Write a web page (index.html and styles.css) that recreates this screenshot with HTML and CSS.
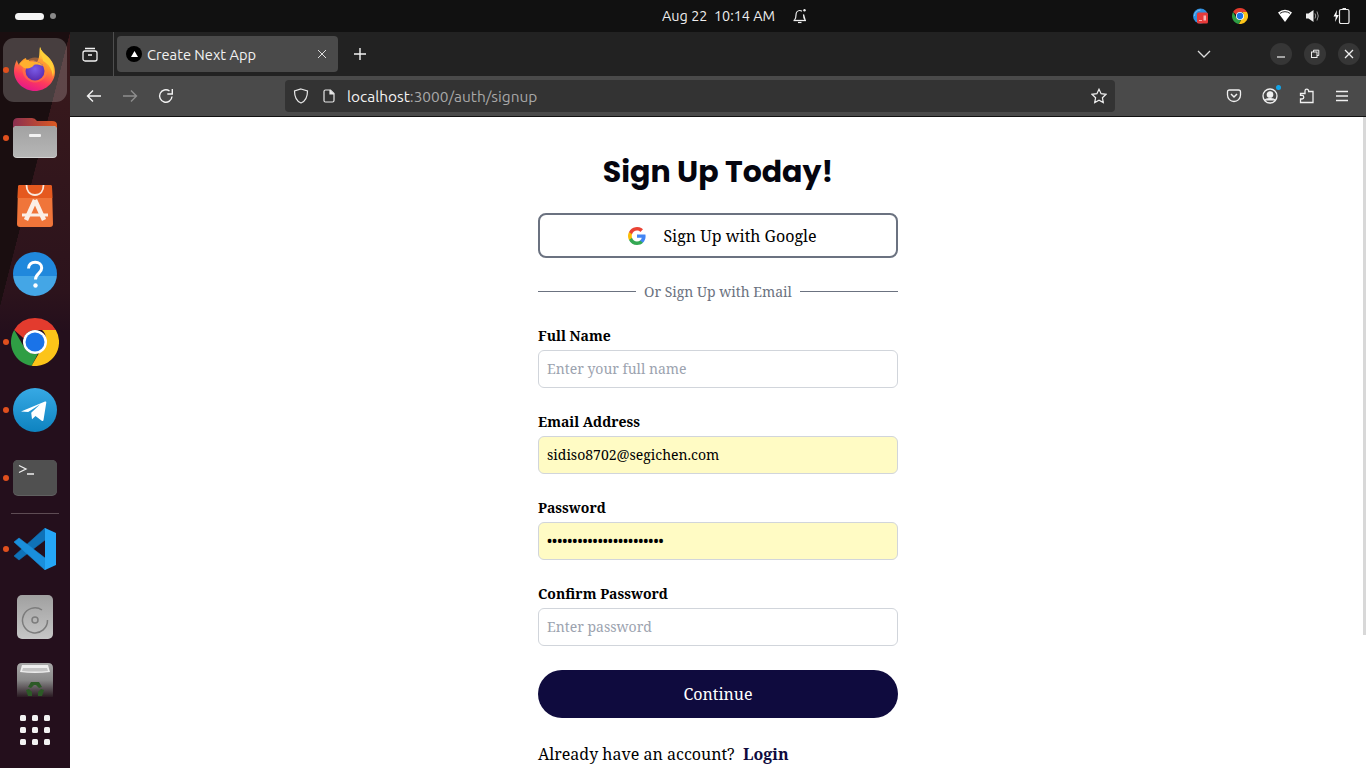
FILE: index.html
```html
<!DOCTYPE html>
<html lang="en">
<head>
<meta charset="utf-8">
<title>Create Next App</title>
<link rel="stylesheet" href="styles.css">
</head>
<body>
<header class="topbar">
  <div class="activities"><span class="pill"></span><span class="wsdot"></span></div>
  <div class="clock"><span>Aug 22&nbsp;&nbsp;10:14 AM</span>
    <svg class="bell" width="14" height="16" viewBox="0 0 14 16" fill="none" stroke="#eee" stroke-width="1.200"><path d="M1.500 12c1.200-1.300 1.500-2.800 1.500-5 0-2.500 1.500-4.500 3.700-4.500 1 0 1.700.3 2.200.7M10.500 6.500c0 2.500.3 4.100 1.600 5.500z"/><path d="M.5 12.500h12.500" stroke-width="1.300"/><path d="M5 14.500h3.500"/><circle cx="11.500" cy="2.200" r="1.200" fill="#eee" stroke="none"/></svg>
  </div>
  <div class="tray">
    <svg class="tray-a" width="16" height="16" viewBox="0 0 16 16"><circle cx="7.500" cy="8" r="7.500" fill="#2f8fe0"/><path d="M1.500 8a6 6 0 0 1 6-6" stroke="#7cc4f5" stroke-width="1" fill="none"/><rect x="4" y="4.500" width="11" height="11" rx="1.500" fill="#e63a3a"/><rect x="6" y="12" width="3" height="1" fill="#f9b0b0"/><rect x="10.500" y="7.500" width="2.500" height="5" fill="#f9b0b0"/></svg>
    <svg class="tray-b" width="16" height="16" viewBox="0 0 48 48"><use href="#chrome"/></svg>
    <svg class="tray-c" width="16" height="14" viewBox="0 0 16 14"><path d="M1 3.500Q8-2 15 3.500L8 13z" fill="#fff"/><path d="M3 4.400Q8 1 13 4.400" stroke="#111" stroke-width=".9" fill="none"/></svg>
    <svg class="tray-d" width="14" height="14" viewBox="0 0 14 14"><path d="M0 4.500h2.500L7.500 1v12L2.500 9.500H0z" fill="#eee"/><path d="M9 4.500q1.500 2.500 0 5M11 2.500q2.500 4.500 0 9" stroke="#999" stroke-width="1" fill="none"/></svg>
    <svg class="tray-e" width="18" height="16" viewBox="0 0 18 16"><path d="M4 2L.5 8.500h2.300L2 14 5.800 7H3.500z" fill="#fff"/><rect x="6.500" y="1.500" width="9.500" height="14" rx="1.500" fill="none" stroke="#eee" stroke-width="1.200"/><rect x="9.500" y="0" width="3.500" height="1.500" fill="#eee"/></svg>
  </div>
</header>

<div class="desktop">
  <nav class="dock">
    <div class="dock-item active"><span class="run"></span>
      <svg width="44" height="44" viewBox="0 0 44 44">
        <defs>
          <linearGradient id="ffa" x1=".7" y1="0" x2=".35" y2="1"><stop offset="0" stop-color="#ffe14a"/><stop offset=".4" stop-color="#ff9a2a"/><stop offset=".72" stop-color="#ff3b5c"/><stop offset="1" stop-color="#e3168c"/></linearGradient>
          <radialGradient id="ffb" cx=".5" cy=".4" r=".6"><stop offset="0" stop-color="#7a5ce8"/><stop offset="1" stop-color="#5a2cb0"/></radialGradient>
        </defs>
        <path d="M27 0c1 4 4 6 7 9 6 5 8 11 8 16 0 10-9 19-20 19S1 35 1 24c0-4 1-8 3-11 0 2 1 3 2 5 1-3 4-6 7-7 0 2 1 3 3 3 5-1 6 0 8 1 3-4 2-10 3-15z" fill="url(#ffa)"/>
        <circle cx="22" cy="23" r="12.500" fill="#ff8a3a" opacity=".45"/>
        <circle cx="22" cy="24" r="9.500" fill="url(#ffb)"/>
        <path d="M6 17c3-3 6-5 9-4 2 0 0 2 4 2 4-1 9 0 11 4-3-1-7-2-9-1-2 3-6 4-10 3z" fill="#ffb02e"/>
        <path d="M27 0c1 4 4 6 7 9 6 5 8 12 6 21-1-8-4-13-10-16 0-5-4-7-3-14z" fill="#ffcf38"/>
      </svg>
    </div>
    <div class="dock-item"><span class="run"></span>
      <svg width="44" height="40" viewBox="0 0 44 40">
        <defs>
          <linearGradient id="fdr" x1="0" y1="0" x2="1" y2="0"><stop offset="0" stop-color="#8a2f50"/><stop offset="1" stop-color="#dd5a22"/></linearGradient>
          <linearGradient id="fdb" x1="0" y1="0" x2="0" y2="1"><stop offset="0" stop-color="#a2a2a2"/><stop offset="1" stop-color="#b6b6b6"/></linearGradient>
        </defs>
        <path d="M0 5q0-5 5-5h14q3 0 5 3h15q5 0 5 4v10H0z" fill="url(#fdr)"/>
        <rect y="8" width="44" height="32" rx="4" fill="#d4d4d4"/>
        <rect y="8" width="44" height="31" rx="4" fill="url(#fdb)"/>
        <rect x="16" y="16" width="12" height="3" rx="1" fill="#f2f2f2"/>
      </svg>
    </div>
    <div class="dock-item">
      <svg width="36" height="42" viewBox="0 0 36 42">
        <path d="M3 0h30q2 0 2 2l1 37q0 3-3 3H3q-3 0-3-3L1 2q0-2 2-2z" fill="#f0753a"/>
        <path d="M3 0h30q2 0 2 2l.4 11H.6L1 2q0-2 2-2z" fill="#e5591f"/>
        <path d="M9.500 0c0 6 3 10 8.500 10s8.500-4 8.500-10" stroke="#f8e8de" stroke-width="1.800" fill="none"/>
        <path d="M18 15L9 35M18 15l9 20" stroke="#fbeee6" stroke-width="4.500" fill="none"/>
        <path d="M5 30h26" stroke="#fbeee6" stroke-width="3"/>
      </svg>
    </div>
    <div class="dock-item">
      <svg width="44" height="44" viewBox="0 0 44 44">
        <clipPath id="hlpc"><circle cx="22" cy="22" r="22"/></clipPath>
        <g clip-path="url(#hlpc)">
          <rect width="44" height="24" fill="#2088dc"/>
          <rect y="24" width="44" height="20" fill="#44a6e6"/>
        </g>
        <path d="M15.500 16.500c0-3.800 2.900-6.200 6.700-6.200s6.500 2.400 6.500 5.700c0 5.500-6.200 5.500-6.200 11.500" stroke="#fff" stroke-width="3" fill="none"/>
        <circle cx="22.500" cy="33.500" r="2.200" fill="#fff"/>
      </svg>
    </div>
    <div class="dock-item"><span class="run"></span>
      <svg width="48" height="48" viewBox="0 0 48 48">
        <symbol id="chrome" viewBox="0 0 48 48">
          <path d="M24 0a24 24 0 0 1 20.800 12H24a12 12 0 0 0-11.400 8.300L3.200 12A24 24 0 0 1 24 0z" fill="#e33b2e"/>
          <path d="M3.200 12l10.400 18A12 12 0 0 0 27 35.600L20.600 47.800A24 24 0 0 1 3.200 12z" fill="#2f9e44"/>
          <path d="M44.800 12A24 24 0 0 1 20.600 47.800L31 30a12 12 0 0 0 0-18z" fill="#fcc419"/>
          <circle cx="24" cy="24" r="12" fill="#fff"/>
          <circle cx="24" cy="24" r="9.500" fill="#1a73e8"/>
        </symbol>
        <use href="#chrome"/>
      </svg>
    </div>
    <div class="dock-item"><span class="run"></span>
      <svg width="44" height="44" viewBox="0 0 44 44">
        <defs><linearGradient id="tg" x1="0" y1="0" x2="0" y2="1"><stop offset="0" stop-color="#37a9e4"/><stop offset="1" stop-color="#0e83c0"/></linearGradient></defs>
        <circle cx="22" cy="22" r="22" fill="url(#tg)"/>
        <path d="M8 23.500L32 13.500q1.500-.5 1.300 1L30.500 32q-.3 1.500-1.800.7L22.500 28l-3.500 3.200-.8-6.500 9-8.500-12 7.700z" fill="#fff"/>
      </svg>
    </div>
    <div class="dock-item"><span class="run"></span>
      <svg width="44" height="36" viewBox="0 0 44 36">
        <rect width="44" height="36" rx="5" fill="#606060"/>
        <rect width="44" height="35" rx="5" fill="#505050"/>
        <path d="M6 5.500l7 3.500-7 3.500" stroke="#eee" stroke-width="1.300" fill="none"/>
        <path d="M14 14h7" stroke="#eee" stroke-width="1.500"/>
      </svg>
    </div>
    <div class="dock-sep"></div>
    <div class="dock-item"><span class="run"></span>
      <svg width="42" height="42" viewBox="0 0 42 42">
        <path d="M31 0v12L5 32 0 28z" fill="#0f72b8" stroke="#0f72b8" stroke-width=".6" stroke-linejoin="round"/>
        <path d="M31 42V30L5 10 0 14z" fill="#1a8fdc" stroke="#1a8fdc" stroke-width=".6" stroke-linejoin="round"/>
        <path d="M31 0l11 5v32l-11 5z" fill="#25a6f6"/>
      </svg>
    </div>
    <div class="dock-item">
      <svg width="36" height="44" viewBox="0 0 36 44">
        <defs><linearGradient id="dsk" x1="0" y1="0" x2="0" y2="1"><stop offset="0" stop-color="#a0a0a0"/><stop offset="1" stop-color="#c6c6c6"/></linearGradient></defs>
        <rect width="36" height="44" rx="5" fill="url(#dsk)"/>
        <path d="M25 15A12.500 12.500 0 1 0 30.500 25" stroke="#7c7c7c" stroke-width="1.500" fill="none"/>
        <circle cx="18" cy="25" r="3" stroke="#7c7c7c" stroke-width="1.500" fill="none"/>
      </svg>
    </div>
    <div class="dock-item">
      <svg width="36" height="34" viewBox="0 0 36 34" class="trash">
        <defs><linearGradient id="tr" x1="0" y1="0" x2="0" y2="1"><stop offset="0" stop-color="#a8a8a8"/><stop offset=".5" stop-color="#8a8a8a"/><stop offset="1" stop-color="#2a1a22"/></linearGradient></defs>
        <path d="M0 5q0-5 5-5h26q5 0 5 5v29H0z" fill="url(#tr)"/>
        <path d="M5 2h26l2 7q-15 2-30 0z" fill="#eee"/>
        <path d="M6 5h24l1 3q-13 1-26 0z" fill="#c4c4c4"/>
        <path d="M14 19h8l3 5-3 1-3-3-2 0-3 3-3-1zM9 27l3-1 3 3v4h-4zM27 27l-3-1-3 3v4h4z" fill="#2c5a26"/>
      </svg>
    </div>
    <div class="dock-apps">
      <span></span><span></span><span></span><span></span><span></span><span></span><span></span><span></span><span></span>
    </div>
  </nav>

  <div class="browser">
    <div class="tabbar">
      <div class="tabview">
        <svg width="16" height="16" viewBox="0 0 16 16" fill="none" stroke="#f2f2f2" stroke-width="1.300"><rect x="1" y="5" width="14" height="10" rx="2"/><path d="M3 2.500h10M6 9h4"/></svg>
      </div>
      <div class="tab">
        <svg class="favicon" width="16" height="16" viewBox="0 0 16 16"><circle cx="8" cy="8" r="8" fill="#000"/><path d="M8.500 5l3.500 6H5z" fill="#fff"/></svg>
        <span class="tab-title">Create Next App</span>
        <svg class="tab-x" width="10" height="10" viewBox="0 0 10 10" stroke="#ddd" stroke-width="1"><path d="M1 1l8 8M9 1l-8 8"/></svg>
      </div>
      <svg class="newtab" width="14" height="14" viewBox="0 0 14 14" stroke="#f2f2f2" stroke-width="1.400"><path d="M7 1v12M1 7h12"/></svg>
      <div class="winctl">
        <svg class="tabs-down" width="14" height="8" viewBox="0 0 14 8" fill="none" stroke="#ddd" stroke-width="1.300"><path d="M1 1l6 6 6-6"/></svg>
        <span class="winbtn"><svg width="10" height="10" viewBox="0 0 10 10" stroke="#eee" stroke-width="1.200"><path d="M1 8h8"/></svg></span>
        <span class="winbtn"><svg width="10" height="10" viewBox="0 0 10 10" stroke="#eee" stroke-width="1" fill="none"><rect x="1.500" y="3" width="5.500" height="5.500"/><path d="M3.500 3V1.200h5.300v5.300H7"/></svg></span>
        <span class="winbtn"><svg width="10" height="10" viewBox="0 0 10 10" stroke="#eee" stroke-width="1.300"><path d="M1 1l8 8M9 1l-8 8"/></svg></span>
      </div>
    </div>
    <div class="toolbar">
      <div class="nav">
        <svg width="16" height="14" viewBox="0 0 16 14" fill="none" stroke="#f2f2f2" stroke-width="1.400"><path d="M15 7H1.500M7 1.500L1.500 7 7 12.500"/></svg>
        <svg width="16" height="14" viewBox="0 0 16 14" fill="none" stroke="#8e8e8e" stroke-width="1.400"><path d="M1 7h13.500M9 1.500L14.500 7 9 12.500"/></svg>
        <svg width="16" height="16" viewBox="0 0 16 16" fill="none" stroke="#f2f2f2" stroke-width="1.400"><path d="M14 8.500A6.200 6.200 0 1 1 11.500 3"/><path d="M14.300 1v5h-5"/></svg>
      </div>
      <div class="urlbar">
        <svg class="shield" width="16" height="16" viewBox="0 0 16 16" fill="none" stroke="#e8e8e8" stroke-width="1.200"><path d="M8 1L14.500 3c0 6-1.500 10-6.500 12C3 13 1.500 9 1.500 3z"/></svg>
        <svg class="pageic" width="12" height="14" viewBox="0 0 12 14" fill="none" stroke="#e8e8e8" stroke-width="1.200"><path d="M1 2.500q0-1.500 1.500-1.500H7.500L11 4.500V11.500q0 1.500-1.500 1.500h-7Q1 13 1 11.500z"/><path d="M7 1v4h4" fill="#e8e8e8"/></svg>
        <span class="url"><span class="host">localhost</span>:3000/auth/signup</span>
        <svg class="star" width="16" height="16" viewBox="0 0 16 16" fill="none" stroke="#f0f0f0" stroke-width="1.200"><path d="M8 1.200l2.100 4.500 4.900.6-3.600 3.400.9 4.900L8 12.200l-4.300 2.400.9-4.900L1 6.300l4.900-.6z"/></svg>
      </div>
      <div class="tools">
        <svg width="16" height="14" viewBox="0 0 16 14" fill="none" stroke="#f0f0f0" stroke-width="1.300"><path d="M1.500 3q0-2 2-2h9q2 0 2 2v3a6.500 6.500 0 0 1-13 0z"/><path d="M5 5l3 3 3-3" stroke-width="1.500"/></svg>
        <span class="acct">
          <svg width="16" height="16" viewBox="0 0 16 16" fill="none" stroke="#f0f0f0" stroke-width="1.300"><circle cx="8" cy="8" r="7"/><circle cx="8" cy="6.500" r="2.700" fill="#f0f0f0"/><path d="M3 12.500c1-2.500 9-2.500 10 0" fill="#f0f0f0"/></svg>
          <span class="acct-dot"></span>
        </span>
        <svg width="16" height="16" viewBox="0 0 16 16" fill="none" stroke="#f0f0f0" stroke-width="1.300"><path d="M7 3V2.500a1.800 1.800 0 0 1 3.600 0V3H15v11H2.500v-3.500H4a1.800 1.800 0 0 0 0-3.600H2.500V5H7z" transform="translate(0 .5)"/></svg>
        <svg width="16" height="12" viewBox="0 0 16 12" stroke="#f0f0f0" stroke-width="1.300"><path d="M2 1.500h12M2 6h12M2 10.500h12"/></svg>
      </div>
    </div>

    <main class="page">
      <div class="scrollthumb"></div>
      <form class="form">
        <h1 class="title">Sign Up Today!</h1>
        <button type="button" class="google">
          <span class="gbox">
            <svg width="18" height="18" viewBox="0 0 18 18">
              <path d="M17.600 9.200c0-.6-.1-1.200-.2-1.800H9v3.400h4.800a4.100 4.100 0 0 1-1.800 2.700v2.200h2.900c1.700-1.600 2.700-3.900 2.700-6.500z" fill="#4285f4"/>
              <path d="M9 18c2.400 0 4.500-.8 6-2.200l-2.900-2.300c-.8.500-1.800.9-3.100.9-2.300 0-4.300-1.600-5-3.700H1v2.300A9 9 0 0 0 9 18z" fill="#34a853"/>
              <path d="M4 10.700a5.400 5.400 0 0 1 0-3.400V5H1a9 9 0 0 0 0 8z" fill="#fbbc05"/>
              <path d="M9 3.600c1.300 0 2.500.5 3.400 1.300l2.600-2.600A9 9 0 0 0 1 5l3 2.300c.7-2.100 2.700-3.700 5-3.700z" fill="#ea4335"/>
            </svg>
          </span>
          <span>Sign Up with Google</span>
        </button>
        <div class="divider"><span>Or Sign Up with Email</span></div>
        <label class="field"><span class="label">Full Name</span><input class="input" type="text" placeholder="Enter your full name"></label>
        <label class="field"><span class="label">Email Address</span><input class="input filled" type="text" value="sidiso8702@segichen.com"></label>
        <label class="field"><span class="label">Password</span><input class="input filled secret" type="password" value="abcdefghijklmnopqrstuvw"></label>
        <label class="field"><span class="label">Confirm Password</span><input class="input" type="password" placeholder="Enter password"></label>
        <button type="button" class="submit">Continue</button>
        <p class="login">Already have an account?&nbsp; <a href="#">Login</a></p>
      </form>
    </main>
  </div>
</div>
</body>
</html>
```

FILE: styles.css
```css
* { box-sizing: border-box; }
html, body { margin: 0; height: 768px; overflow: hidden; background: #fff; }
body { display: flex; flex-direction: column; font-family: "Noto Serif", "DejaVu Serif", serif; }
svg { display: block; flex: none; }

.topbar { height: 32px; background: #111; display: flex; align-items: center; color: #eee; font: 14.4px "Ubuntu", "Noto Sans", "Open Sans", sans-serif; flex: none; }
.activities { width: 662px; padding-left: 15px; display: flex; align-items: center; gap: 6px; }
.pill { width: 29px; height: 7px; border-radius: 4px; background: #f4f4f4; }
.wsdot { width: 6px; height: 6px; border-radius: 50%; background: #8a8a8a; }
.clock { display: flex; align-items: center; gap: 18px; }
.tray { margin-left: auto; display: flex; align-items: center; padding-right: 15px; }
.tray-b { margin-left: 23px; }
.tray-c { margin-left: 29px; }
.tray-d { margin-left: 13px; }
.tray-e { margin-left: 13px; }

.desktop { flex: 1; display: flex; min-height: 0; }
.dock { width: 70px; flex: none; padding-top: 4px; display: flex; flex-direction: column; background:
  linear-gradient(to bottom right, #1a0e10 50%, transparent 50.2%) 0 0 / 70px 274px no-repeat,
  linear-gradient(to bottom, #3a1a1c 0, #2c131c 260px, #240f1c 300px); background-color: #240f1c; }
.dock-item { height: 68px; position: relative; display: flex; align-items: center; justify-content: center; flex: none; }
.dock-item.active::before { content: ""; position: absolute; left: 3px; top: 2px; width: 64px; height: 64px; border-radius: 11px; background: rgba(255,255,255,.2); }
.dock-item svg { position: relative; }
.dock-item.active svg { margin-top: -2px; }
.run { position: absolute; left: 3px; top: 50%; width: 6px; height: 6px; margin-top: -3px; border-radius: 50%; background: #e0501e; }
.dock-sep { height: 3px; margin: 0 11px; flex: none; display: flex; align-items: flex-start; padding-top: 1px; }
.dock-sep::before { content: ""; width: 100%; height: 1px; background: #5e4c54; }
.trash { align-self: flex-start; margin-top: 12px; }
.dock-apps { display: grid; grid-template-columns: repeat(3, 6px); gap: 6px; justify-content: center; margin-top: -4px; }
.dock-apps span { width: 6px; height: 6px; border-radius: 1.500px; background: #f2f2f2; }

.browser { flex: 1; min-width: 0; display: flex; flex-direction: column; }
.tabbar { height: 44px; background: #222; display: flex; align-items: center; flex: none; }
.tabview { width: 44px; height: 100%; border-right: 1px solid #4e4e4e; display: flex; align-items: center; justify-content: center; padding-right: 4px; }
.tab { width: 221px; height: 36px; margin-left: 3px; background: #4a4a4a; border-radius: 4px; display: flex; align-items: center; padding: 0 11px 0 9px; color: #f2f2f2; font: 14.67px "Ubuntu", "Noto Sans", "Open Sans", sans-serif; }
.tab-title { margin-left: 5px; flex: 1; padding-top: 1px; }
.newtab { margin-left: 15px; }
.winctl { margin-left: auto; display: flex; align-items: center; padding-right: 6px; }
.tabs-down { margin-right: 59px; }
.winbtn { width: 22px; height: 22px; border-radius: 50%; background: #363636; display: flex; align-items: center; justify-content: center; margin-left: 12px; }
.tabs-down + .winbtn { margin-left: 0; }

.toolbar { height: 41px; background: #4a4a4a; border-bottom: 1px solid #111; display: flex; align-items: center; flex: none; }
.nav { width: 215px; padding-left: 16px; display: flex; align-items: center; gap: 20px; }
.urlbar { width: 830px; height: 32px; background: #333; border-radius: 4px; display: flex; align-items: center; padding: 0 8px; color: #a8a8a8; font: 15.45px "Ubuntu", "Noto Sans", "Open Sans", sans-serif; }
.pageic { margin-left: 14px; }
.url { margin-left: 12px; flex: 1; }
.host { color: #f2f2f2; }
.tools { margin-left: 111px; display: flex; align-items: center; gap: 20px; }
.acct { position: relative; display: block; }
.acct-dot { position: absolute; right: -3px; top: -3px; width: 5px; height: 5px; border-radius: 50%; background: #12a4e8; }

.page { flex: 1; min-height: 0; background: #fff; position: relative; display: flex; justify-content: center; overflow: hidden; }
.scrollthumb { position: absolute; right: 0; top: 0; width: 3px; height: 518px; background: #d8d8d8; }
.form { width: 360px; display: flex; flex-direction: column; padding-top: 35px; color: #000; }
.title { margin: 0; height: 40px; font: 700 30px/40px "Poppins", "Inter", "Noto Sans", sans-serif; text-align: center; color: #05050f; }
.google { margin-top: 21px; height: 45px; border: 2px solid #6b7280; border-radius: 8px; background: #fff; display: flex; align-items: center; justify-content: center; gap: 9px; font: 16px "Noto Serif", "DejaVu Serif", serif; color: #000; padding: 0; }
.gbox { width: 34px; height: 34px; margin-left: 1px; display: flex; align-items: center; justify-content: center; }
.divider { margin-top: 23px; height: 20px; display: flex; align-items: center; gap: 8px; color: #6b7280; font-size: 14px; white-space: nowrap; }
.divider::before, .divider::after { content: ""; flex: 1; height: 1px; background: #6b7280; }
.field { display: block; margin-top: 24px; height: 62px; }
.divider + .field { margin-top: 25px; }
.label { display: block; height: 24px; font-size: 14px; font-weight: 700; line-height: 20px; }
.input { display: block; width: 100%; height: 38px; border: 1px solid #d1d5db; border-radius: 6px; padding: 0 8px 2px; font: 14px "Noto Serif", "DejaVu Serif", serif; color: #000; background: #fff; outline: none; }
.input::placeholder { color: #9ca3af; opacity: 1; }
.filled { background: #fffbc4; }
.secret { font-size: 14px; letter-spacing: 0; }
.submit { margin-top: 24px; height: 48px; border: 0; border-radius: 24px; background: #0f0b3e; color: #fff; font: 16px "Noto Serif", "DejaVu Serif", serif; flex: none; }
.login { margin: 24px 0 0; font-size: 16px; line-height: 24px; white-space: nowrap; }
.login a { color: #0f0b3e; font-weight: 700; text-decoration: none; }
```
